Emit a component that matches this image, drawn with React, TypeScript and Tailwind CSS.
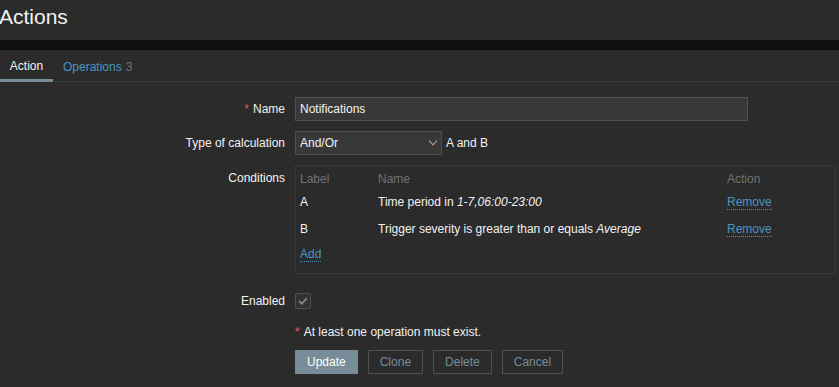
const font = { fontFamily: '"Liberation Sans", Arial, sans-serif' };

const Link = ({ children }: { children: React.ReactNode }) => (
  <span className="text-[#4796c4] border-b border-dotted border-[#4796c4] leading-[14px]">
    {children}
  </span>
);

const conditions = [
  { label: "A", name: <>Time period in <i>1-7,06:00-23:00</i></>, cls: "h-[22px]" },
  { label: "B", name: <>Trigger severity is greater than or equals <i>Average</i></>, cls: "h-[22px] mt-[5px]" },
];

const Row = ({ label, required, children, top }: { label: string; required?: boolean; children: React.ReactNode; top?: boolean }) => (
  <div className={`flex ${top ? "items-start" : "items-center"}`}>
    <div className={`w-[295px] pr-[10px] text-right shrink-0 ${top ? "pt-[4px]" : ""}`}>
      {required && <span className="text-[#e45959] mr-[4px]">*</span>}
      {label}
    </div>
    {children}
  </div>
);

export default function App() {
  return (
    <div className="w-[839px] h-[387px] bg-[#2b2b2b] text-[#f2f2f2] text-[12px] overflow-hidden" style={font}>
      <header className="h-[40px] flex items-center">
        <h1 className="text-[21px] leading-none -mt-[8px] -ml-[1px]">Actions</h1>
      </header>
      <div className="h-[10px] bg-[#0e1012]" />

      <nav className="h-[32px] flex border-b border-[#383838]">
        <div className="w-[53px] flex items-center justify-center border-b-[3px] border-[#768d99] -mb-[1px] pt-[3px]">
          Action
        </div>
        <div className="flex items-center pl-[10px] pt-[2px] text-[#4796c4]">
          Operations <span className="text-[#737373] ml-[4px]">3</span>
        </div>
      </nav>

      <div className="pt-[15px] flex flex-col">
        <Row label="Name" required>
          <div className="w-[453px] h-[24px] bg-[#383838] border border-[#4f4f4f] flex items-center px-[4px]">
            Notifications
          </div>
        </Row>

        <div className="mt-[10px]">
          <Row label="Type of calculation">
            <div className="w-[147px] h-[24px] bg-[#383838] border border-[#4f4f4f] flex items-center justify-between pl-[4px] pr-[3px]">
              <span>And/Or</span>
              <svg width="10" height="6" viewBox="0 0 10 6" fill="none" stroke="#9a9a9a" strokeWidth="1.2">
                <path d="M1 0.7 L5 4.8 L9 0.7" />
              </svg>
            </div>
            <span className="ml-[4px]">A and B</span>
          </Row>
        </div>

        <div className="mt-[10px]">
          <Row label="Conditions" top>
            <div className="w-[541px] h-[109px] border border-[#383838] pl-[4px] pr-[5px] pt-[1px]">
              <div className="grid grid-cols-[78px_349px_1fr] h-[24px] items-center text-[#737373]">
                <span>Label</span>
                <span>Name</span>
                <span>Action</span>
              </div>
              {conditions.map((c) => (
                <div key={c.label} className={`grid grid-cols-[78px_349px_1fr] items-center ${c.cls}`}>
                  <span>{c.label}</span>
                  <span>{c.name}</span>
                  <span><Link>Remove</Link></span>
                </div>
              ))}
              <div className="h-[28px] flex items-center">
                <Link>Add</Link>
              </div>
            </div>
          </Row>
        </div>

        <div className="mt-[18px]">
          <Row label="Enabled">
            <div className="w-[16px] h-[16px] bg-[#333333] border border-[#4f4f4f] rounded-[2px] flex items-center justify-center">
              <svg width="10" height="8" viewBox="0 0 10 8" fill="none" stroke="#6f8591" strokeWidth="2">
                <path d="M1 4 L3.8 6.6 L9 1.2" />
              </svg>
            </div>
          </Row>
        </div>

        <div className="ml-[295px] mt-[13px]">
          <span className="text-[#e45959] mr-[4px]">*</span>At least one operation must exist.
        </div>

        <div className="ml-[295px] mt-[9px] flex gap-[10px]">
          <button className="h-[24px] px-[11px] bg-[#768d99] border border-[#768d99] text-white">Update</button>
          <button className="h-[24px] px-[11px] border border-[#4f4f4f] text-[#768d99]">Clone</button>
          <button className="h-[24px] px-[11px] border border-[#4f4f4f] text-[#768d99]">Delete</button>
          <button className="h-[24px] px-[11px] border border-[#4f4f4f] text-[#768d99]">Cancel</button>
        </div>
      </div>
    </div>
  );
}
